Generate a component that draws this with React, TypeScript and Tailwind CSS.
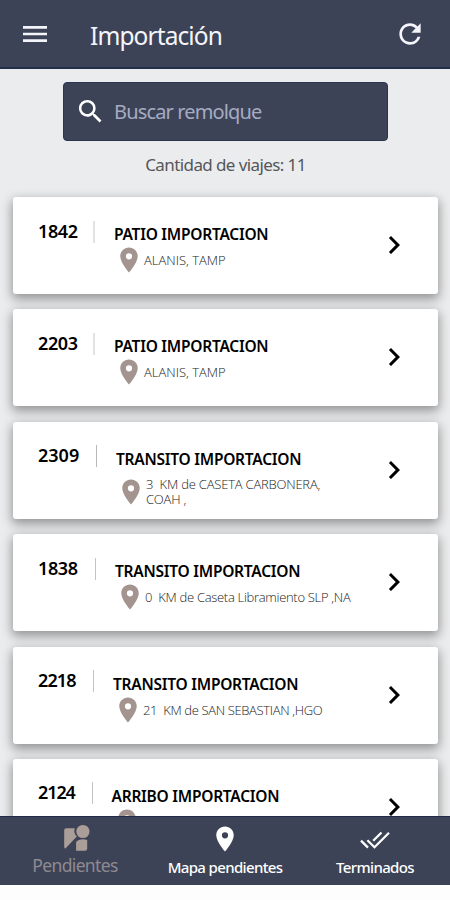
import {
  MdChevronRight,
  MdMenu,
  MdPlace,
  MdRefresh,
  MdSearch,
} from "react-icons/md";

type Viaje = {
  numero: string;
  estado: string;
  lugar: string;
  // ancho de la columna del número y separación del texto
  columna: string;
  numeroTracking: string;
  lugarTracking: string;
  linea: string;
};

const viajes: Viaje[] = [
  { numero: "1842", estado: "PATIO IMPORTACION", lugar: "ALANIS, TAMP", columna: "w-[101px]", numeroTracking: "tracking-[-0.4px]", lugarTracking: "tracking-[0px]", linea: "w-[2px] bg-[#e2e2e3]" },
  { numero: "2203", estado: "PATIO IMPORTACION", lugar: "ALANIS, TAMP", columna: "w-[101px]", numeroTracking: "tracking-[-0.4px]", lugarTracking: "tracking-[0px]", linea: "w-[2px] bg-[#e2e2e3]" },
  { numero: "2309", estado: "TRANSITO IMPORTACION", lugar: "3  KM de CASETA CARBONERA,\nCOAH ,", columna: "w-[103px]", numeroTracking: "tracking-[0px]", lugarTracking: "tracking-[-0.2px]", linea: "w-px bg-[#b9b9bb]" },
  { numero: "1838", estado: "TRANSITO IMPORTACION", lugar: "0  KM de Caseta Libramiento SLP ,NA", columna: "w-[102px]", numeroTracking: "tracking-[-0.4px]", lugarTracking: "tracking-[-0.3px]", linea: "w-px bg-[#c4c4c6]" },
  { numero: "2218", estado: "TRANSITO IMPORTACION", lugar: "21  KM de SAN SEBASTIAN ,HGO", columna: "w-[100px]", numeroTracking: "tracking-[-0.9px]", lugarTracking: "tracking-[-0.35px]", linea: "w-px bg-[#c4c4c6]" },
  { numero: "2124", estado: "ARRIBO IMPORTACION", lugar: "", columna: "w-[98.5px]", numeroTracking: "tracking-[-1.1px]", lugarTracking: "tracking-[-0.4px]", linea: "w-px bg-[#c4c4c6]" },
];

function TripleCheck() {
  return (
    <svg width="30" height="18" viewBox="0 0 30 18" fill="none" stroke="white" strokeWidth="2.3">
      <path d="M1 9.6 L8 16.6" />
      <path d="M7.4 9.3 L14.5 16.2 L29 1.7" />
      <path d="M13.2 9.7 L21.5 1.5" />
    </svg>
  );
}

function PendientesIcon() {
  return (
    <svg className="ml-[3px]" width="28" height="28" viewBox="0 0 28 28" fill="#ab9d97">
      <path d="M3.2 4.2 H11.7 A8.4 8.4 0 0 0 13.8 12.4 L2.2 24.8 Q1.2 24 1.2 22.8 V6.2 Q1.2 4.2 3.2 4.2 Z" />
      <circle cx="19.9" cy="7.5" r="6.6" />
      <path d="M15.5 16.2 Q19.5 14.3 24.2 16 V24.6 Q24.2 26.8 22 26.8 H13.1 V18.6 Q13.1 17.2 15.5 16.2 Z" />
    </svg>
  );
}

function Tarjeta({ viaje }: { viaje: Viaje }) {
  const dosLineas = viaje.lugar.includes("\n");

  return (
    <article className="flex h-[97px] shrink-0 rounded-[3px] bg-white shadow-[0_4px_11px_1px_rgba(0,0,0,0.38)]">
      <div className={`mt-[23.5px] flex h-[22px] shrink-0 pr-[19px] pl-[25px] ${viaje.columna}`}>
        <span className={`-mt-px flex-1 text-[18px] leading-[23px] font-semibold text-black ${viaje.numeroTracking}`}>{viaje.numero}</span>
        <span className={`h-full shrink-0 ${viaje.linea}`} />
      </div>
      <div className="min-w-0 flex-1 pt-[27px]">
        <h2 className="text-[15.5px] leading-[20px] font-semibold tracking-[-0.25px] whitespace-nowrap text-black">{viaje.estado}</h2>
        <div className="mt-px flex h-[30px] items-center">
          <MdPlace className={`h-[30px] w-[30px] shrink-0 text-[#a3948f] ${dosLineas ? "mt-[14px]" : ""}`} />
          <p className={`font-["Open_Sans",sans-serif] text-[13px] leading-[15px] font-light whitespace-pre text-[#222] ${viaje.lugarTracking} ${dosLineas ? "mt-[15px]" : "mt-[1px]"}`}>{viaje.lugar}</p>
        </div>
      </div>
      <MdChevronRight className="mt-[30px] mr-[26px] h-9 w-9 shrink-0 text-black" />
    </article>
  );
}

export default function App() {
  return (
    <div className="flex h-[900px] w-[450px] flex-col overflow-hidden bg-[#fdfdfd] font-['Noto_Sans',sans-serif]">
      <header className="flex h-[69px] shrink-0 items-center border-b-2 border-[#22304a] bg-[#3d4357] pr-6 pl-[19px] text-[#f4f5fa]">
        <MdMenu className="h-8 w-8" />
        <h1 className="mt-[4px] ml-[39px] flex-1 text-[24.5px] leading-8 tracking-[-0.9px]">Importación</h1>
        <MdRefresh className="h-8 w-8" />
      </header>

      <main className="flex min-h-0 flex-1 flex-col overflow-hidden bg-[#ebeced] pt-[13px] pr-[12px] pl-[13px]">
        <div className="mx-auto flex h-[59px] w-[325px] shrink-0 items-center rounded-[4px] border border-[#2a3550] bg-[#3d4357] pl-[11px]">
          <MdSearch className="h-[31px] w-[31px] text-white" />
          <span className="ml-[8px] text-[20px] tracking-[-0.85px] text-[#a5abc3]">Buscar remolque</span>
        </div>
        <p className="mt-[12px] h-[44px] shrink-0 text-center text-[17px] leading-6 tracking-[-0.6px] text-[#55565a]">Cantidad de viajes: 11</p>
        <div className="flex flex-col gap-[15.4px]">
          {viajes.map((viaje) => (
            <Tarjeta key={viaje.numero} viaje={viaje} />
          ))}
        </div>
      </main>

      <nav className="mb-[15px] grid h-[69px] shrink-0 grid-cols-3 border-t border-[#1f2b47] bg-[#3d4357] text-center text-white">
        <div className="flex flex-col items-center pt-[7px] text-[#8f8a90]">
          <PendientesIcon />
          <span className="mt-px text-[17.5px] leading-[24px] tracking-[-0.65px]">Pendientes</span>
        </div>
        <div className="flex flex-col items-center pt-[7px]">
          <MdPlace className="h-[30px] w-[30px] shrink-0" />
          <span className="mt-px text-[15px] leading-[24px] font-medium tracking-[-0.65px]">Mapa pendientes</span>
        </div>
        <div className="flex flex-col items-center pt-[14px]">
          <TripleCheck />
          <span className="mt-[6px] text-[15px] leading-[24px] font-medium tracking-[-0.65px]">Terminados</span>
        </div>
      </nav>
    </div>
  );
}
